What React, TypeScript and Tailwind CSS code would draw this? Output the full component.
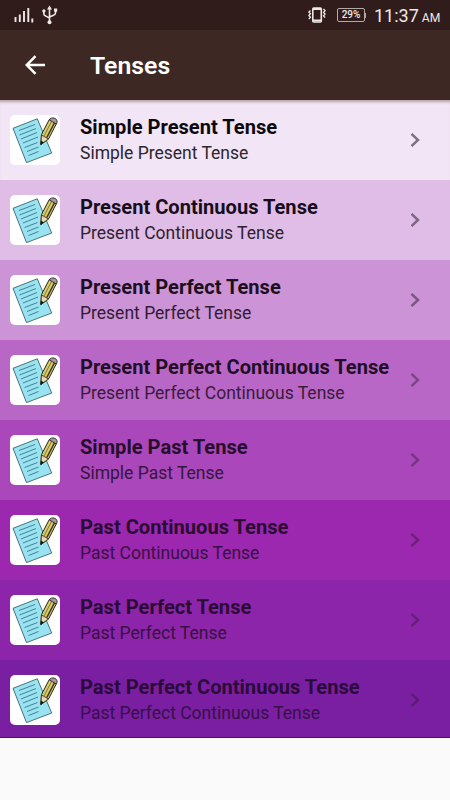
const tenses = [
  { name: "Simple Present Tense", bg: "bg-[#f2e5f5]", title: "text-[#0d0a0f]", sub: "text-[#2b272d]", arrow: "text-[#7c727c]" },
  { name: "Present Continuous Tense", bg: "bg-[#e0bde6]", title: "text-[#170e1b]", sub: "text-[#2d222f]", arrow: "text-[#7d667f]" },
  { name: "Present Perfect Tense", bg: "bg-[#cc93d7]", title: "text-[#1c0f20]", sub: "text-[#2f1d33]", arrow: "text-[#7a5680]" },
  { name: "Present Perfect Continuous Tense", bg: "bg-[#b967c7]", title: "text-[#220f27]", sub: "text-[#371c3c]", arrow: "text-[#7b4784]" },
  { name: "Simple Past Tense", bg: "bg-[#aa47bb]", title: "text-[#270e2c]", sub: "text-[#35163b]", arrow: "text-[#75377f]" },
  { name: "Past Continuous Tense", bg: "bg-[#9b28af]", title: "text-[#2b0c32]", sub: "text-[#3a1043]", arrow: "text-[#6b2277]" },
  { name: "Past Perfect Tense", bg: "bg-[#8d25aa]", title: "text-[#2a0c34]", sub: "text-[#371043]", arrow: "text-[#652077]" },
  { name: "Past Perfect Continuous Tense", bg: "bg-[#7a1fa1]", title: "text-[#2b0b39]", sub: "text-[#370f49]", arrow: "text-[#5c1c74]" },
];

function NoteIcon() {
  return (
    <div className="h-[50px] w-[50px] shrink-0 overflow-hidden rounded-[5px] bg-white">
      <svg viewBox="0 0 50 50" className="h-full w-full" fill="none">
        <path d="M3 13.300 27.300 3.800 41.700 38 16.500 47.600Z" fill="#97e3f1" stroke="#2f4f5a" strokeWidth="0.800" />
        <path
          d="M9 15.500 25 9.500M9.500 20 26 13.500M11 24 27 17.500M13 28l15-6M14.500 32.500 27.500 27.500M17 36.500l11.500-4.500M18.500 40.500l10-4"
          stroke="#4b7f92"
          strokeWidth="1"
        />
        <path d="M30.800 29.500 31.500 19.500 39.300 4.500 46.500 8.500 38.500 24Z" fill="#d5ca72" stroke="#292718" strokeWidth="1" />
        <path d="M34 21 41.800 6" stroke="#7d722f" strokeWidth="0.900" />
        <path d="M36.800 22.500 44.700 7.500" stroke="#39341a" strokeWidth="1.500" />
        <path d="M31.500 20 38.500 24 30.800 29.500Z" fill="#ead9a2" stroke="#292718" strokeWidth="0.800" />
        <path d="M31 25.500 34 27.500 30.500 30Z" fill="#171717" />
        <path d="M39.500 5C40.500 1.500 48 2.500 47 7.500L46.300 9Z" fill="#a9969d" stroke="#3b3236" strokeWidth="1" />
      </svg>
    </div>
  );
}

function StatusBar() {
  return (
    <div className="flex h-[30px] items-center bg-[#301d1b] text-[#efe7e5]">
      <svg width="20" height="18" viewBox="0 0 20 18" className="ml-[14px]" stroke="currentColor" strokeWidth="1.900">
        <path d="M1.500 16v-5M5.800 16V8.500M10 16V5M14.300 16V2M18.300 16.500v-4" />
      </svg>
      <svg width="16" height="20" viewBox="0 0 16 20" className="ml-2" fill="none" stroke="currentColor" strokeWidth="1.600">
        <path d="M7.500 3v14M1.800 6.500v2q0 1.700 1.700 2.400L7.500 13M13.500 5v3q0 1.600-2 2.300L7.500 12" />
        <path d="M7.500.5 10 4.500H5Z" fill="currentColor" stroke="none" />
        <circle cx="7.500" cy="17.300" r="2" fill="currentColor" stroke="none" />
        <circle cx="1.900" cy="6" r="1.700" fill="currentColor" stroke="none" />
        <path d="M12 3.500h3.200v3.200H12z" fill="currentColor" stroke="none" />
      </svg>
      <svg width="18" height="18" viewBox="0 0 18 18" className="ml-[250px]" fill="none" stroke="currentColor">
        <rect x="4.800" y="2" width="8.500" height="14" rx="1" strokeWidth="1.600" />
        <path d="M5 14.300h8M5 3h8" strokeWidth="1.800" />
        <path d="M2.500 4.500.8 6.200l1.700 1.600L.8 9.500l1.700 1.700-1.700 1.800M15.500 3l1.600 1.700-1.600 1.700 1.600 1.700-1.600 1.700 1.600 1.700" strokeWidth="1.300" />
      </svg>
      <div className="relative ml-[11px] flex h-[14px] w-[28px] items-center justify-center rounded-[2px] border border-[#b3a9a6] text-[10px] leading-none font-medium">
        29%
        <span className="absolute top-[4px] -right-[2px] h-[5px] w-[2px] bg-[#b3a9a6]" />
      </div>
      <div className="ml-[9px] flex items-baseline whitespace-nowrap">
        <span className="text-[18px]">11:37</span>
        <span className="ml-[3px] text-[12.200px]">AM</span>
      </div>
    </div>
  );
}

export default function App() {
  return (
    <div className="h-[800px] w-[450px] overflow-hidden bg-[#fafafa] font-['Roboto',sans-serif]">
      <StatusBar />
      <header className="flex h-[70px] items-center bg-[#3d2824] text-white">
        <svg width="20" height="20" viewBox="0 0 20 20" className="ml-[25px]" fill="none" stroke="currentColor" strokeWidth="2.500">
          <path d="M20 10H2M10.500 1.200 1.700 10l8.800 8.800" />
        </svg>
        <h1 className="ml-[45px] pt-px text-[24.800px] leading-[30px] font-semibold">Tenses</h1>
      </header>
      <ul className="h-[638px] overflow-hidden border-b border-[#500c70]">
        {tenses.map((t, i) => (
          <li key={t.name} className={`flex h-20 items-center pl-[10px] ${t.bg} ${i === 0 ? "shadow-[inset_0_4px_3px_-2px_#b5a1a6]" : ""}`}>
            <NoteIcon />
            <div className="ml-5 flex-1 whitespace-nowrap">
              <div className={`-mt-px text-[20.100px] leading-[26px] font-bold ${t.title}`}>{t.name}</div>
              <div className={`pt-px text-[17.500px] leading-[24px] ${t.sub}`}>{t.name}</div>
            </div>
            <svg width="10" height="16" viewBox="0 0 10 16" className={`mr-[30px] shrink-0 ${t.arrow}`} fill="none" stroke="currentColor" strokeWidth="2.500">
              <path d="M1.500 1.800 8 8l-6.500 6.200" />
            </svg>
          </li>
        ))}
      </ul>
    </div>
  );
}
